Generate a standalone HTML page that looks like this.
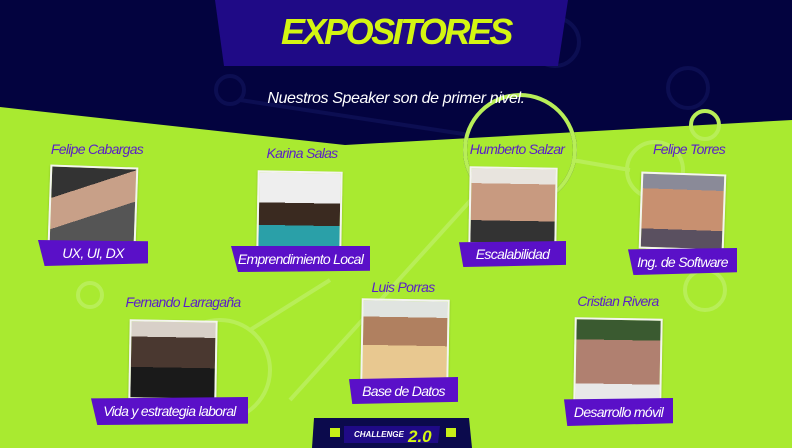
<!DOCTYPE html>
<html><head><meta charset="utf-8"><style>
*{margin:0;padding:0;box-sizing:border-box}
body{width:792px;height:448px;overflow:hidden;position:relative;background:#a9ea30;font-family:"Liberation Sans",sans-serif}
.abs{position:absolute}
.name{position:absolute;color:#5a1fc8;font-style:italic;font-size:14px;transform:translateX(-50%);white-space:nowrap;letter-spacing:-0.7px}
.ph{position:absolute;border:2px solid #f4f4f0;box-shadow:0 1px 2px rgba(0,0,0,.2)}
.lb{position:absolute;background:#5a10c8;color:#fff;font-style:italic;font-size:14px;display:flex;align-items:center;justify-content:center;white-space:nowrap;letter-spacing:-0.7px}
</style></head><body>
<svg class="abs" style="left:0;top:0" width="792" height="448">
<polygon points="0,0 792,0 792,120 345,145 0,107" fill="#03033f"/>
<g fill="none" stroke="#0c0e52" stroke-width="4">
<circle cx="520" cy="150" r="55"/><circle cx="555" cy="42" r="24"/><circle cx="230" cy="90" r="14"/><circle cx="688" cy="88" r="20"/>
<line x1="240" y1="100" x2="470" y2="135"/></g>
<g fill="none" stroke="#b8ee58" stroke-width="4">
<circle cx="520" cy="150" r="55"/><circle cx="655" cy="170" r="28"/><circle cx="705" cy="125" r="14"/>
<line x1="480" y1="190" x2="290" y2="400"/><line x1="572" y1="160" x2="630" y2="170"/>
<circle cx="90" cy="295" r="12"/><circle cx="220" cy="370" r="50"/><circle cx="705" cy="290" r="20"/>
<line x1="330" y1="280" x2="250" y2="330"/></g>
<polygon points="215,0 568,0 558,66 224,66" fill="#1f0a86"/>
<polygon points="314,418 469,418 472,448 312,448" fill="#0b0a4c"/>
<polygon points="344,426 440,426 438,443 344,443" fill="#1f0a86"/>
<rect x="330" y="428" width="10" height="9" fill="#c8f018"/><rect x="446" y="428" width="10" height="9" fill="#c8f018"/>
<text x="354" y="437" font-family="Liberation Sans" font-size="8" font-style="italic" font-weight="bold" fill="#fff">CHALLENGE</text>
<text x="408" y="442" font-family="Liberation Sans" font-size="17" font-style="italic" font-weight="bold" fill="#d4f512">2.0</text>
</svg>
<div class="abs" style="left:0;top:11px;width:792px;text-align:center;color:#d4f512;font-size:36px;font-weight:bold;font-style:italic;letter-spacing:-2.5px">EXPOSITORES</div>
<div class="abs" style="left:0;top:90px;width:792px;text-align:center;color:#fff;font-size:16px;font-style:italic;letter-spacing:-0.4px">Nuestros Speaker son de primer nivel.</div>

<div class="name" style="left:97px;top:141px">Felipe Cabargas</div>
<div class="ph" style="left:49px;top:166px;width:88px;height:78px;background:linear-gradient(160deg,#333 0 30%,#c8a088 30% 60%,#555 60%);transform:rotate(2deg)"></div>
<div class="lb" style="left:38px;top:240px;width:110px;height:26px;clip-path:polygon(0 0,100% 5%,100% 90%,6% 100%)">UX, UI, DX</div>

<div class="name" style="left:302px;top:145px">Karina Salas</div>
<div class="ph" style="left:257px;top:171px;width:85px;height:79px;background:linear-gradient(180deg,#eee 0 40%,#3a2a20 40% 70%,#2aa0a8 70%);transform:rotate(1deg)"></div>
<div class="lb" style="left:231px;top:246px;width:139px;height:26px;clip-path:polygon(0 0,100% 0,100% 95%,5% 100%)">Emprendimiento Local</div>

<div class="name" style="left:517px;top:141px">Humberto Salzar</div>
<div class="ph" style="left:469px;top:167px;width:88px;height:78px;background:linear-gradient(180deg,#e8e4de 0 20%,#c89a80 20% 70%,#333 70%);transform:rotate(1deg)"></div>
<div class="lb" style="left:459px;top:241px;width:107px;height:26px;clip-path:polygon(0 5%,100% 0,100% 92%,4% 100%)">Escalabilidad</div>

<div class="name" style="left:689px;top:141px">Felipe Torres</div>
<div class="ph" style="left:640px;top:173px;width:85px;height:77px;background:linear-gradient(180deg,#8a8a98 0 20%,#c89070 20% 75%,#5a5060 75%);transform:rotate(2deg)"></div>
<div class="lb" style="left:628px;top:248px;width:109px;height:27px;clip-path:polygon(0 5%,100% 0,100% 90%,5% 100%)">Ing. de Software</div>

<div class="name" style="left:183px;top:294px">Fernando Larragaña</div>
<div class="ph" style="left:129px;top:320px;width:88px;height:80px;background:linear-gradient(180deg,#d8d0c8 0 20%,#4a3830 20% 60%,#1a1a1a 60%);transform:rotate(1deg)"></div>
<div class="lb" style="left:91px;top:397px;width:157px;height:28px;clip-path:polygon(0 5%,100% 0,100% 95%,4% 100%)">Vida y estrategia laboral</div>

<div class="name" style="left:403px;top:279px">Luis Porras</div>
<div class="ph" style="left:361px;top:299px;width:88px;height:85px;background:linear-gradient(180deg,#e0e4e0 0 20%,#b08060 20% 55%,#e8c890 55%);transform:rotate(1deg)"></div>
<div class="lb" style="left:349px;top:377px;width:109px;height:27px;clip-path:polygon(0 8%,100% 0,100% 92%,3% 100%)">Base de Datos</div>

<div class="name" style="left:618px;top:293px">Cristian Rivera</div>
<div class="ph" style="left:574px;top:318px;width:88px;height:84px;background:linear-gradient(180deg,#3a5a30 0 25%,#b08070 25% 80%,#e8e8e8 80%);transform:rotate(1deg)"></div>
<div class="lb" style="left:564px;top:398px;width:109px;height:28px;clip-path:polygon(0 5%,100% 0,100% 90%,3% 100%)">Desarrollo móvil</div>
</body></html>
